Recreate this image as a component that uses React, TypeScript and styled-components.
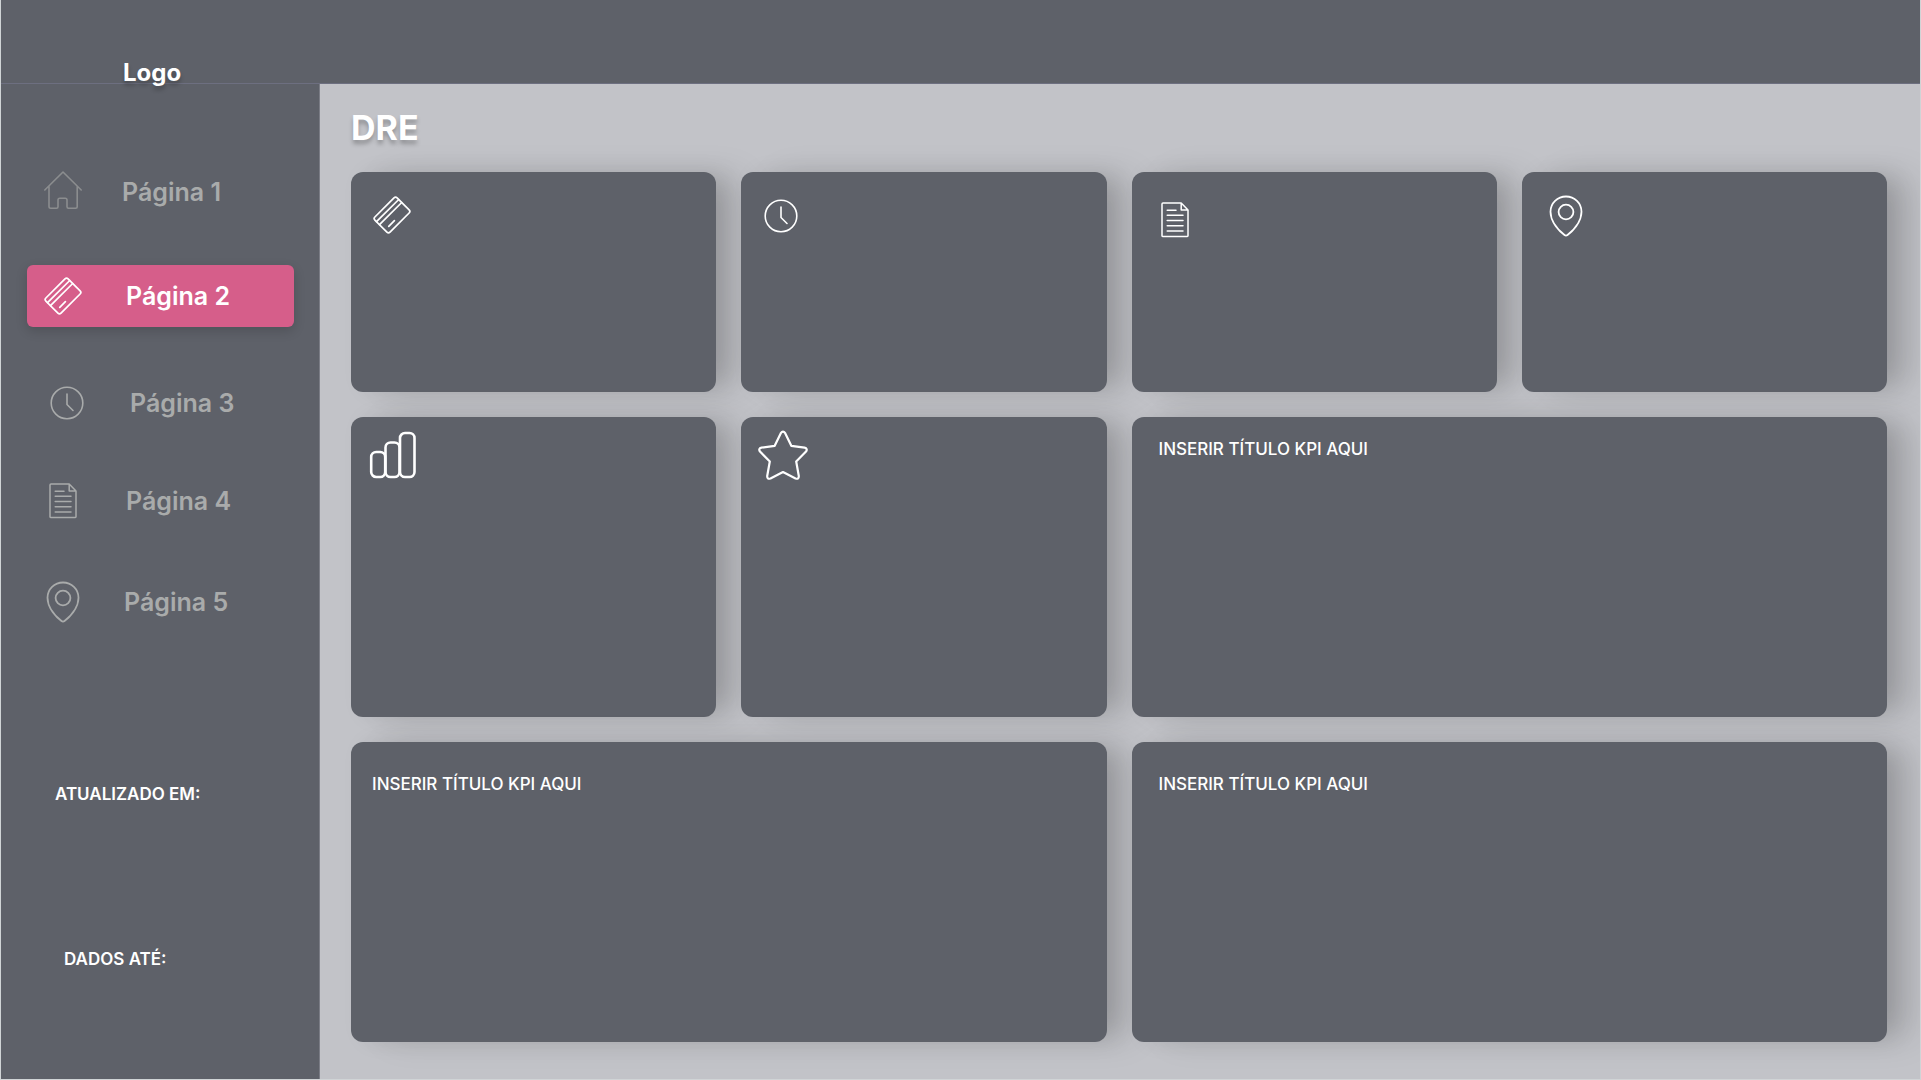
import React from 'react';
import styled, { createGlobalStyle, css } from 'styled-components';

const slate = '#5e6169';
const mist = '#c2c3c8';

const GlobalStyle = createGlobalStyle`
  *, *::before, *::after { box-sizing: border-box; }
  body {
    margin: 0;
    background: ${mist};
    font-family: Inter, "Liberation Sans", sans-serif;
  }
  h1, h2, p, ul { margin: 0; padding: 0; }
`;

const Page = styled.div`
  min-height: 100vh;
  display: grid;
  grid-template-columns: 319px minmax(0, 1fr);
  grid-template-rows: 84px 1fr;
  border: 1px solid #d0d4d6;
  border-top: 0;
  overflow: hidden;
`;

const Header = styled.header`
  grid-column: 1 / -1;
  display: flex;
  align-items: flex-end;
  padding-left: 122px;
  background: ${slate};
  border-bottom: 1px solid #6d6f80;
`;

const Logo = styled.a`
  position: relative;
  z-index: 1;
  color: #fff;
  font-size: 24px;
  line-height: 20px;
  font-weight: 700;
  text-decoration: none;
  text-shadow: 0 4px 4px rgba(0, 0, 0, 0.25);
`;

const Sidebar = styled.aside`
  display: flex;
  flex-direction: column;
  padding: 77px 25px 0 26px;
  background: ${slate};
  border-right: 1px solid #7b7d86;
`;

const Menu = styled.ul`
  display: flex;
  flex-direction: column;
  list-style: none;
`;

const MenuItem = styled.li<{ $space: number }>`
  padding-top: ${(p) => p.$space}px;
`;

const MenuLink = styled.a<{ $active?: boolean; $indent: number; $gap: number }>`
  display: flex;
  align-items: center;
  gap: ${(p) => p.$gap}px;
  height: 62px;
  padding-left: ${(p) => p.$indent}px;
  border-radius: 6px;
  color: #a9abab;
  font-size: 25px;
  line-height: 30px;
  font-weight: 600;
  text-decoration: none;
  ${(p) =>
    p.$active &&
    css`
      color: #fff;
      background: #d65e8a;
      box-shadow: 0 4px 12px rgba(0, 0, 0, 0.16);
    `}
`;

const Status = styled.div`
  display: flex;
  flex-direction: column;
  gap: 143px;
  margin-top: 150px;
  color: #fff;
  font-size: 17px;
  line-height: 22px;
  font-weight: 600;
`;

const StatusLine = styled.p<{ $indent: number }>`
  padding-left: ${(p) => p.$indent}px;
`;

const Main = styled.main`
  display: flex;
  flex-direction: column;
  gap: 23px;
  padding: 22px 33px 37px 31px;
`;

const Title = styled.h1`
  color: #fff;
  font-size: 34px;
  line-height: 43px;
  font-weight: 700;
  text-shadow: 0 4px 4px rgba(0, 0, 0, 0.25);
`;

const Board = styled.div`
  flex: 1;
  display: grid;
  grid-template-columns: repeat(4, minmax(0, 1fr));
  grid-template-rows: 220fr 300fr 300fr;
  gap: 25px;
`;

const Card = styled.section<{ $wide?: boolean; $top: number; $left: number }>`
  grid-column: span ${(p) => (p.$wide ? 2 : 1)};
  padding: ${(p) => p.$top}px 20px 20px ${(p) => p.$left}px;
  border-radius: 12px;
  background: ${slate};
  box-shadow:
    12px 0 24px -4px rgba(0, 0, 0, 0.13),
    32px 0 36px -6px rgba(0, 0, 0, 0.13);
`;

const CardTitle = styled.h2`
  color: #fff;
  font-size: 17px;
  line-height: 22px;
  font-weight: 500;
`;

const Icon = styled.svg<{ $color?: string }>`
  display: block;
  flex: none;
  fill: none;
  stroke: ${(p) => p.$color ?? 'currentColor'};
  stroke-linecap: round;
  stroke-linejoin: round;
`;

const White = '#fff';
type IconProps = { color?: string };

const HomeIcon = ({ color }: IconProps) => (
  <Icon $color={color} width="38" height="42" viewBox="0 0 38 42" strokeWidth="1.6" aria-hidden="true">
    <path d="M.8 19 19 1l18.2 18M5 15.500V35.500Q5 37.200 6.700 37.200H12.500Q14 37.200 14 35.700V29Q14 27.300 15.700 27.300H21.300Q23 27.300 23 29V35.700Q23 37.200 24.500 37.200H31.500Q33.200 37.200 33.200 35.500V15.500" />
  </Icon>
);

const CardIcon = ({ color }: IconProps) => (
  <Icon $color={color} width="38" height="38" viewBox="0 0 38 38" strokeWidth="1.7" aria-hidden="true">
    <g transform="translate(19 19) rotate(-45)">
      <rect x="-15.700" y="-10.700" width="31.400" height="21.400" rx="2.200" />
      <path d="M-15.700-6.200H15.700M-15.700-2H15.700M-10.300 5.700H-2.300" />
    </g>
  </Icon>
);

const ClockIcon = ({ color }: IconProps) => (
  <Icon $color={color} width="34" height="34" viewBox="0 0 34 34" strokeWidth="1.6" aria-hidden="true">
    <circle cx="17" cy="17" r="15.800" />
    <path d="M17 8V18.500L23 24.500" />
  </Icon>
);

const DocIcon = ({ color }: IconProps) => (
  <Icon $color={color} width="28" height="36" viewBox="0 0 28 36" strokeWidth="1.500" aria-hidden="true">
    <path d="M2 1H20.200L27 8V33.800Q27 34.500 26.300 34.500H1.700Q1 34.500 1 33.800V2Q1 1 2 1ZM20.200 1V8H27M6.200 8.200H15M6.200 13.200H22M6.200 18.500H22M6.200 23.700H22M6.200 28.900H22" />
  </Icon>
);

const PinIcon = ({ color }: IconProps) => (
  <Icon $color={color} width="34" height="42" viewBox="0 0 34 42" strokeWidth="1.8" aria-hidden="true">
    <path d="M17 1.500C8.500 1.500 1.500 8.200 1.500 16.800C1.500 27.500 11 36.500 15.500 40Q17 41.200 18.500 40C23 36.500 32.500 27.500 32.500 16.800C32.500 8.200 25.500 1.500 17 1.500Z" />
    <circle cx="17" cy="17" r="7.400" />
  </Icon>
);

const BarsIcon = ({ color }: IconProps) => (
  <Icon $color={color} width="48" height="48" viewBox="0 0 48 48" strokeWidth="2.600" aria-hidden="true">
    <rect x="2.200" y="21" width="14" height="25" rx="5" />
    <rect x="16.500" y="11.500" width="14" height="34.500" rx="5" />
    <rect x="31" y="2" width="14.500" height="44" rx="5" />
  </Icon>
);

const StarIcon = ({ color }: IconProps) => (
  <Icon $color={color} width="50" height="50" viewBox="0 0 50 50" strokeWidth="2.200" aria-hidden="true">
    <path d="M22.800 3.200Q25 0 27.200 3.200L33.300 15.800L46.500 17.600Q50 18.500 48 21.600L38.200 31.500L40.800 46Q41 49.500 37.500 48.500L25 42L12.500 48.500Q9 49.500 9.200 46L11.800 31.500L2 21.600Q0 18.500 3.500 17.600L16.700 15.800Z" />
  </Icon>
);

const pages = [
  { name: 'Página 1', icon: <HomeIcon color="#8b8d8f" />, space: 0, indent: 17, gap: 40 },
  { name: 'Página 2', icon: <CardIcon />, space: 42, indent: 17, gap: 44, active: true },
  { name: 'Página 3', icon: <ClockIcon />, space: 45, indent: 23, gap: 46 },
  { name: 'Página 4', icon: <DocIcon />, space: 36, indent: 22, gap: 49 },
  { name: 'Página 5', icon: <PinIcon />, space: 39, indent: 19, gap: 44 },
];

const kpiTitle = 'INSERIR TÍTULO KPI AQUI';

const cards = [
  { icon: <CardIcon color={White} />, top: 24, left: 22 },
  { icon: <ClockIcon color={White} />, top: 27, left: 23 },
  { icon: <DocIcon color={White} />, top: 30, left: 29 },
  { icon: <PinIcon color={White} />, top: 23, left: 27 },
  { icon: <BarsIcon color={White} />, top: 14, left: 18 },
  { icon: <StarIcon color={White} />, top: 13, left: 17 },
  { title: kpiTitle, top: 21, left: 27, wide: true },
  { title: kpiTitle, top: 31, left: 21, wide: true },
  { title: kpiTitle, top: 31, left: 27, wide: true },
];

export default function App() {
  return (
    <>
      <GlobalStyle />
      <Page>
        <Header>
          <Logo href="#">Logo</Logo>
        </Header>
        <Sidebar>
          <nav>
            <Menu>
              {pages.map((p) => (
                <MenuItem key={p.name} $space={p.space}>
                  <MenuLink
                    href="#"
                    $active={p.active}
                    $indent={p.indent}
                    $gap={p.gap}
                    aria-current={p.active ? 'page' : undefined}
                  >
                    {p.icon}
                    {p.name}
                  </MenuLink>
                </MenuItem>
              ))}
            </Menu>
          </nav>
          <Status>
            <StatusLine $indent={28}>ATUALIZADO EM:</StatusLine>
            <StatusLine $indent={37}>DADOS ATÉ:</StatusLine>
          </Status>
        </Sidebar>
        <Main>
          <Title>DRE</Title>
          <Board>
            {cards.map((c, i) => (
              <Card key={i} $wide={c.wide} $top={c.top} $left={c.left}>
                {c.icon}
                {c.title && <CardTitle>{c.title}</CardTitle>}
              </Card>
            ))}
          </Board>
        </Main>
      </Page>
    </>
  );
}
